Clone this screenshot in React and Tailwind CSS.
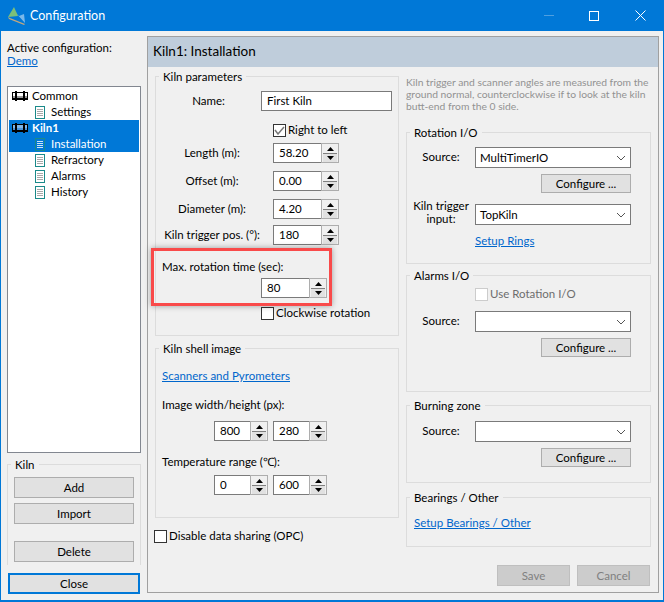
import React from 'react';

const AppIcon = () => (
    <svg width="18" height="18" viewBox="0 0 18 18" className="shrink-0">
        <path d="M7 5 L11 9 L16 7 L17 16 Z" fill="#79b8ea" />
        <path d="M6 0 L0 10 L10 9 Z" fill="#7cc07a" />
        <path d="M0 10 L2 11 L17 17 L16 18 L1 12 Z" fill="#c4a77d" />
    </svg>
);

const KilnIcon = ({ light }) => (
    <svg width="16" height="10" viewBox="0 0 16 10" className="shrink-0">
        <rect x="0" y="1" width="16" height="8" fill="#000" />
        <rect x="1" y="2" width="14" height="3" fill={light ? '#7fb5e6' : '#ffffff'} />
        <rect x="1" y="5" width="14" height="2" fill={light ? '#4a93d8' : '#999999'} />
        <rect x="3" y="0" width="2" height="10" fill="#000" />
        <rect x="11" y="0" width="2" height="10" fill="#000" />
    </svg>
);

const DocIcon = ({ light }) => (
    <svg width="10" height="13" viewBox="0 0 10 13" className="shrink-0">
        <rect x="0.5" y="0.5" width="9" height="12" fill={light ? '#0078d7' : '#ffffff'} stroke="#1a8a8a" />
        <path d="M2 3.5H8M2 5.5H8M2 7.5H8M2 9.5H8" stroke={light ? '#cfe3f5' : '#a8a8a8'} />
    </svg>
);

const Chevron = () => (
    <svg width="10" height="6" viewBox="0 0 10 6">
        <path d="M1 1 L5 5 L9 1" fill="none" stroke="#555" />
    </svg>
);

const Arrow = ({ down }) => (
    <svg width="7" height="4" viewBox="0 0 7 4">
        <path d={down ? 'M0 0 H7 L3.5 4 Z' : 'M3.5 0 L7 4 H0 Z'} fill="#000" />
    </svg>
);

const Spin = ({ value, small }) => (
    <div className={`flex h-[20px] bg-white ${small ? 'w-[54px]' : 'w-[66px]'}`}>
        <div className="flex-1 border border-r-0 border-[#7a7a7a] pl-[5px] leading-[18px]">{value}</div>
        <div className="w-[18px] border border-[#adadad] bg-[#f0f0f0] px-px flex flex-col">
            <div className="flex h-[9px] items-center justify-center"><Arrow /></div>
            <div className="flex h-[9px] items-center justify-center border-t border-[#808080] bg-[#e1e1e1]"><Arrow down /></div>
        </div>
    </div>
);

const Select = ({ value }) => (
    <div className="flex h-[21px] w-[156px] items-center justify-between border border-[#7a7a7a] bg-white pl-[4px] pr-[4px]">
        <span>{value}</span>
        <Chevron />
    </div>
);

const Check = ({ label, checked, disabled }) => (
    <div className="flex h-[13px] items-center gap-[2px] whitespace-nowrap">
        <div className={`flex h-[13px] w-[13px] shrink-0 items-center justify-center border ${disabled ? 'border-[#cccccc]' : 'border-[#333333]'} bg-white`}>
            {checked && (
                <svg width="11" height="9" viewBox="0 0 11 9">
                    <path d="M1 4 L4 8 L10 1" fill="none" stroke="#777" strokeWidth="1.5" />
                </svg>
            )}
        </div>
        <span className={`-mt-[2px] ${disabled ? 'text-[#6d6d6d]' : ''}`}>{label}</span>
    </div>
);

const Button = ({ label, className }) => (
    <div className={`flex items-center justify-center border border-[#adadad] bg-[#e1e1e1] ${className}`}>{label}</div>
);

const Link = ({ children }) => <span className="whitespace-nowrap text-[#0066cc] underline">{children}</span>;

const Group = ({ title, className, children }) => (
    <div className={`relative border border-[#dcdcdc] ${className}`}>
        <span className="absolute left-[3px] top-[-7px] bg-[#f0f0f0] px-[4px] leading-[14px] whitespace-nowrap">{title}</span>
        {children}
    </div>
);

const SpinRow = ({ label, value, className }) => (
    <div className={`flex items-center ${className}`}>
        <div className="w-[112px] mr-[5px] shrink-0 pb-[2px] text-center whitespace-nowrap">{label}</div>
        <Spin value={value} />
    </div>
);

const SourceRow = ({ value, className }) => (
    <div className={`flex items-center ${className}`}>
        <div className="w-[68px] shrink-0 pb-[2px] text-center whitespace-nowrap">Source:</div>
        <Select value={value} />
    </div>
);

const TreeRow = ({ kiln, selected, bold, children }) => (
    <div className={`flex h-[16px] items-center ${kiln ? 'pl-[3px] gap-[4px]' : 'pl-[26px] gap-[6px]'} ${selected ? 'bg-[#0078d7] text-white' : ''} ${bold ? 'font-bold' : ''}`}>
        {kiln ? <KilnIcon light={selected} /> : <DocIcon light={selected} />}
        <span className="-mt-[2px]">{children}</span>
    </div>
);

const App = () => {
    return (
        <div
            className="relative flex h-[602px] w-[664px] flex-col overflow-hidden border-x border-b-2 border-[#0078d7] bg-[#f0f0f0] text-[11.5px] leading-[13px] text-black"
            style={{ fontFamily: 'Lato, sans-serif' }}
        >
            <div className="-mx-px flex h-[31px] shrink-0 items-center bg-[#0078d7] text-white">
                <div className="ml-[8px] mr-[4px]"><AppIcon /></div>
                <span className="text-[12.5px]">Configuration</span>
                <div className="ml-auto flex items-center">
                    <div className="mr-[35px] h-px w-[10px] bg-[#4f9fe0]" />
                    <div className="mr-[36px] h-[10px] w-[10px] border border-white" />
                    <svg width="11" height="11" viewBox="0 0 11 11" className="mr-[18px]">
                        <path d="M0.5 0.5 L10.5 10.5 M10.5 0.5 L0.5 10.5" stroke="#fff" />
                    </svg>
                </div>
            </div>

            <div className="flex flex-1">
                <div className="w-[146px] shrink-0 pl-[6px] pt-[10px]">
                    <div className="whitespace-nowrap">Active configuration:</div>
                    <div className="h-[13px]"><Link>Demo</Link></div>
                    <div className="mt-[19px] h-[367px] w-[134px] border border-[#828790] bg-white px-px pt-px">
                        <TreeRow kiln>Common</TreeRow>
                        <TreeRow>Settings</TreeRow>
                        <TreeRow kiln selected bold>Kiln1</TreeRow>
                        <TreeRow selected>Installation</TreeRow>
                        <TreeRow>Refractory</TreeRow>
                        <TreeRow>Alarms</TreeRow>
                        <TreeRow>History</TreeRow>
                    </div>
                    <div className="relative mt-[11px] h-[101px] w-[134px] border border-b-0 border-[#dcdcdc] px-[6px] pt-[12px]">
                        <span className="absolute left-[3px] top-[-7px] bg-[#f0f0f0] px-[4px] leading-[14px]">Kiln</span>
                        <Button label="Add" className="h-[21px]" />
                        <Button label="Import" className="mt-[5px] h-[21px]" />
                        <Button label="Delete" className="mt-[17px] h-[21px]" />
                    </div>
                    <div className="ml-px mt-[8px] flex h-[21px] w-[132px] items-center justify-center border-2 border-[#0078d7] bg-[#e1e1e1]">Close</div>
                </div>

                <div className="mt-[5px] h-[557px] w-[512px] shrink-0 border border-[#a0a0a0]">
                    <div className="flex h-[30px] items-center bg-[#bfcddb] pb-px pl-[5px] text-[13.5px]">Kiln1: Installation</div>
                    <div className="flex pl-[7px]">
                        <div className="w-[244px] shrink-0 pt-[9px]">
                            <Group title="Kiln parameters" className="h-[260px]">
                                <div className="mt-[14px] flex items-center">
                                    <div className="w-[105px] shrink-0 pb-[2px] text-center">Name:</div>
                                    <div className="h-[20px] w-[131px] border border-[#7a7a7a] bg-white pl-[5px] leading-[18px]">First Kiln</div>
                                </div>
                                <div className="ml-[117px] mt-[13px]"><Check label="Right to left" checked /></div>
                                <SpinRow label="Length (m):" value="58.20" className="mt-[6px]" />
                                <SpinRow label="Offset (m):" value="0.00" className="mt-[8px]" />
                                <SpinRow label="Diameter (m):" value="4.20" className="mt-[8px]" />
                                <SpinRow label="Kiln trigger pos. (°):" value="180" className="mt-[6px]" />
                                <div className="ml-[6px] mt-[15px]">Max. rotation time (sec):</div>
                                <div className="ml-[105px] mt-[5px]"><Spin value="80" /></div>
                                <div className="ml-[105px] mt-[9px]"><Check label="Clockwise rotation" /></div>
                            </Group>
                            <Group title="Kiln shell image" className="mt-[12px] h-[170px]">
                                <div className="ml-[6px] mt-[20px] h-[13px]"><Link>Scanners and Pyrometers</Link></div>
                                <div className="ml-[6px] mt-[16px]">Image width/height (px):</div>
                                <div className="ml-[58px] mt-[10px] flex gap-[5px]">
                                    <Spin value="800" small />
                                    <Spin value="280" small />
                                </div>
                                <div className="ml-[6px] mt-[14px]">Temperature range (℃):</div>
                                <div className="ml-[58px] mt-[7px] flex gap-[5px]">
                                    <Spin value="0" small />
                                    <Spin value="600" small />
                                </div>
                            </Group>
                            <div className="-ml-px mt-[12px]"><Check label="Disable data sharing (OPC)" /></div>
                        </div>

                        <div className="ml-[7px] w-[245px] shrink-0">
                            <div className="mt-[9px] h-[36px] whitespace-nowrap text-[10.3px] leading-[12px] text-[#929292]">
                                Kiln trigger and scanner angles are measured from the<br />
                                ground normal, counterclockwise if to look at the kiln<br />
                                butt-end from the 0 side.
                            </div>
                            <Group title="Rotation I/O" className="mt-[20px] h-[132px]">
                                <SourceRow value="MultiTimerIO" className="mt-[14px]" />
                                <Button label="Configure ..." className="ml-[134px] mt-[6px] h-[19px] w-[90px]" />
                                <div className="mt-[11px] flex h-[21px] items-center">
                                    <div className="-mt-[6px] w-[68px] shrink-0 text-center">Kiln trigger input:</div>
                                    <Select value="TopKiln" />
                                </div>
                                <div className="ml-[68px] mt-[9px] h-[13px]"><Link>Setup Rings</Link></div>
                            </Group>
                            <Group title="Alarms I/O" className="mt-[11px] h-[117px]">
                                <div className="ml-[68px] mt-[12px]"><Check label="Use Rotation I/O" disabled /></div>
                                <SourceRow className="mt-[10px]" />
                                <Button label="Configure ..." className="ml-[134px] mt-[6px] h-[19px] w-[90px]" />
                            </Group>
                            <Group title="Burning zone" className="mt-[13px] h-[78px]">
                                <SourceRow className="mt-[15px]" />
                                <Button label="Configure ..." className="ml-[134px] mt-[6px] h-[19px] w-[90px]" />
                            </Group>
                            <Group title="Bearings / Other" className="mt-[14px] h-[50px]">
                                <div className="ml-[7px] mt-[18px] h-[13px]"><Link>Setup Bearings / Other</Link></div>
                            </Group>
                            <div className="mt-[18px] flex justify-end gap-[7px] pr-px text-[#808080]">
                                <div className="flex h-[21px] w-[73px] items-center justify-center border border-[#bfbfbf] bg-[#cccccc]">Save</div>
                                <div className="flex h-[21px] w-[73px] items-center justify-center border border-[#bfbfbf] bg-[#cccccc]">Cancel</div>
                            </div>
                        </div>
                    </div>
                </div>
            </div>

            {/* red annotation drawn over the dialog */}
            <div className="absolute left-[150px] top-[248px] h-[58px] w-[181px] border-[3px] border-[#f94a4a] shadow-[0_0_6px_rgba(0,0,0,0.35)]" />
        </div>
    );
};

export default App;
